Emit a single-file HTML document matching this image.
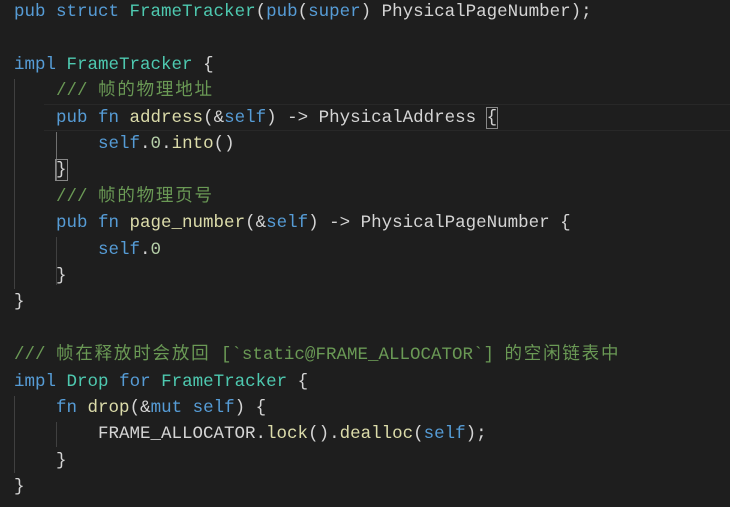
<!DOCTYPE html>
<html><head><meta charset="utf-8"><style>
body{margin:0;width:730px;height:507px;background:#1e1e1e;overflow:hidden;position:relative;font-family:"Liberation Mono","Noto Sans CJK SC",monospace;font-size:17.5px;color:#d4d4d4}
.l{position:absolute;left:14px;height:26.4px;line-height:26.4px;white-space:pre}
.k{color:#569cd6}.t{color:#4ec9b0}.f{color:#dcdcaa}.c{color:#6a9955}.n{color:#b5cea8}
.z{letter-spacing:1.8px}
.g{position:absolute;width:1px;background:#404040}
.cur{position:absolute;left:44px;right:0;top:104px;height:25px;border-top:1px solid #282828;border-bottom:1px solid #282828}
.bb{outline:1px solid #888;}
</style></head><body>
<div class="cur"></div>
<div class="g" style="left:14px;top:79px;height:210px"></div>
<div class="g" style="left:56px;top:132px;height:48px;background:#707070"></div>
<div class="g" style="left:56px;top:237px;height:48px"></div>
<div class="g" style="left:14px;top:396px;height:77px"></div>
<div class="g" style="left:56px;top:422px;height:25px"></div>
<div class="l" style="top:-1px"><span class="k">pub struct</span> <span class="t">FrameTracker</span>(<span class="k">pub</span>(<span class="k">super</span>) PhysicalPageNumber);</div>
<div class="l" style="top:51.8px"><span class="k">impl</span> <span class="t">FrameTracker</span> {</div>
<div class="l c" style="top:78.2px">    /// <span class="z">帧的物理地址</span></div>
<div class="l" style="top:104.6px">    <span class="k">pub fn</span> <span class="f">address</span>(&amp;<span class="k">self</span>) -&gt; PhysicalAddress <span class="bb">{</span></div>
<div class="l" style="top:131px">        <span class="k">self</span>.<span class="n">0</span>.<span class="f">into</span>()</div>
<div class="l" style="top:157.4px">    <span class="bb">}</span></div>
<div class="l c" style="top:183.8px">    /// <span class="z">帧的物理页号</span></div>
<div class="l" style="top:210.2px">    <span class="k">pub fn</span> <span class="f">page_number</span>(&amp;<span class="k">self</span>) -&gt; PhysicalPageNumber {</div>
<div class="l" style="top:236.6px">        <span class="k">self</span>.<span class="n">0</span></div>
<div class="l" style="top:263px">    }</div>
<div class="l" style="top:289.4px">}</div>
<div class="l c" style="top:342.2px">/// <span class="z">帧在释放时会放回</span> [`static@FRAME_ALLOCATOR`] <span class="z">的空闲链表中</span></div>
<div class="l" style="top:368.6px"><span class="k">impl</span> <span class="t">Drop</span> <span class="k">for</span> <span class="t">FrameTracker</span> {</div>
<div class="l" style="top:395px">    <span class="k">fn</span> <span class="f">drop</span>(&amp;<span class="k">mut self</span>) {</div>
<div class="l" style="top:421.4px">        FRAME_ALLOCATOR.<span class="f">lock</span>().<span class="f">dealloc</span>(<span class="k">self</span>);</div>
<div class="l" style="top:447.8px">    }</div>
<div class="l" style="top:474.2px">}</div>
</body></html>
